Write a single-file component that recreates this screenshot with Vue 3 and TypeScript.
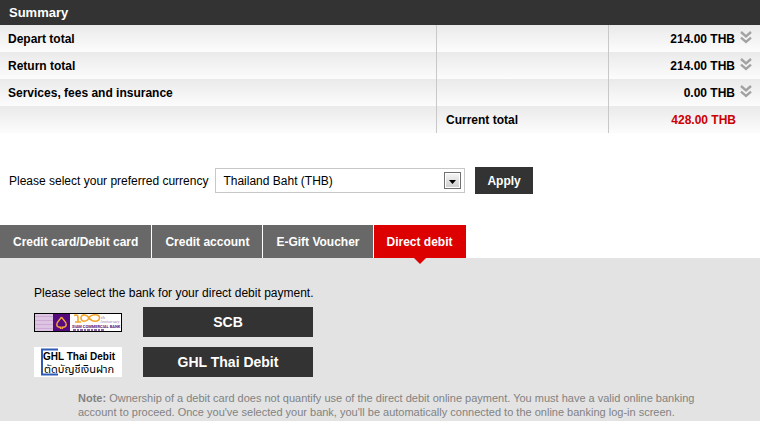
<script setup lang="ts">
import { ref } from 'vue'

interface SummaryRow {
  label: string
  amount: string
}

const rows: SummaryRow[] = [
  { label: 'Depart total', amount: '214.00 THB' },
  { label: 'Return total', amount: '214.00 THB' },
  { label: 'Services, fees and insurance', amount: '0.00 THB' },
]

const tabs: string[] = ['Credit card/Debit card', 'Credit account', 'E-Gift Voucher', 'Direct debit']
const activeTab = ref<string>('Direct debit')
const currency = ref<string>('THB')
</script>

<template>
  <main class="page">
    <section>
      <h2 class="summary-title">Summary</h2>
      <table class="summary">
        <colgroup>
          <col />
          <col class="col-label" />
          <col class="col-amount" />
        </colgroup>
        <tbody>
          <tr v-for="row in rows" :key="row.label">
            <th scope="row">{{ row.label }}</th>
            <td></td>
            <td class="amount">
              <div class="amount-inner">
                <span>{{ row.amount }}</span>
                <button type="button" class="expand" :aria-label="row.label">
                  <svg width="12" height="14" viewBox="0 0 12 14" fill="none" stroke="#a2a2a2" stroke-width="2.4">
                    <path d="M1 1 L6 5.4 L11 1" />
                    <path d="M1 6.6 L6 11 L11 6.6" />
                  </svg>
                </button>
              </div>
            </td>
          </tr>
          <tr>
            <td></td>
            <th scope="row">Current total</th>
            <td class="amount grand">428.00 THB</td>
          </tr>
        </tbody>
      </table>
    </section>

    <form class="currency" @submit.prevent>
      <label for="currency">Please select your preferred currency</label>
      <div class="select-box">
        <select id="currency" v-model="currency">
          <option value="THB">Thailand Baht (THB)</option>
        </select>
        <svg class="arrow" width="17" height="17" viewBox="0 0 17 17">
          <defs>
            <linearGradient id="arrow-fill" x1="0" y1="0" x2="0" y2="1">
              <stop offset="0" stop-color="#f4f4f4" />
              <stop offset="1" stop-color="#cfcfcf" />
            </linearGradient>
          </defs>
          <rect x=".5" y=".5" width="16" height="16" fill="#fff" stroke="#707070" />
          <rect x="2" y="2" width="13" height="13" fill="url(#arrow-fill)" />
          <path d="M5 8 H12 L8.5 12 Z" fill="#000" />
        </svg>
      </div>
      <button type="submit" class="apply">Apply</button>
    </form>

    <nav class="tabs" role="tablist">
      <button
        v-for="tab in tabs"
        :key="tab"
        type="button"
        role="tab"
        class="tab"
        :class="{ active: tab === activeTab }"
        :aria-selected="tab === activeTab"
        @click="activeTab = tab"
      >
        {{ tab }}
      </button>
    </nav>

    <section class="panel" role="tabpanel">
      <p class="lead">Please select the bank for your direct debit payment.</p>
      <div class="bank">
        <svg class="logo" width="88" height="19" viewBox="0 0 88 19">
          <rect width="88" height="19" fill="#fff" />
          <rect x="1" y="1" width="18" height="17" fill="#dcc4e2" />
          <path d="M1 3.5H19M1 7.5H19M1 11.5H19M1 15.5H19" stroke="#cdaad4" />
          <rect x="19" y="1" width="17" height="17" fill="#550a7e" />
          <path
            d="M27.5 4 C26.5 6.5 22.8 8 22.8 11.5 C22.8 13.6 24 14.4 26.6 14.2 V16 M27.5 4 C28.5 6.5 32.2 8 32.2 11.5 C32.2 13.6 31 14.4 28.4 14.2 V16"
            fill="none"
            stroke="#f4a43c"
            stroke-width="1.5"
          />
          <g fill="none" stroke="#f3a52e" stroke-width="1.6">
            <path d="M40 2.5 C42 1.5 44 2 44 4 V8.5 M41 9H47" />
            <path d="M55 5 C53 1 47 0.8 47 5 C47 9.5 53 9 55 5 C57 1 66 0.5 65.5 5 C65 9.5 58 9 55 5 Z" />
          </g>
          <text x="67" y="6" class="logo-th">th</text>
          <text x="66" y="10" class="logo-ann">Anniversary</text>
          <text x="38" y="15" class="logo-scb">SIAM COMMERCIAL BANK</text>
          <path d="M39 17H70" stroke="#673485" stroke-width="1.4" stroke-dasharray="3 1 2 1" />
          <rect x=".5" y=".5" width="87" height="18" fill="none" stroke="#000" />
        </svg>
        <button type="button" class="bank-button">SCB</button>
      </div>
      <div class="bank">
        <svg class="logo" width="88" height="30" viewBox="0 0 88 30">
          <rect width="88" height="30" fill="#fff" />
          <path d="M24 2.5H8V27.5H24" fill="none" stroke="#2f5ab5" stroke-width="2" />
          <text x="9" y="13" class="logo-ghl">GHL Thai Debit</text>
          <text x="10" y="26" class="logo-thai">ตัดบัญชีเงินฝาก</text>
        </svg>
        <button type="button" class="bank-button">GHL Thai Debit</button>
      </div>
      <p class="note">
        <strong>Note:</strong> Ownership of a debit card does not quantify use of the direct debit online payment. You
        must have a valid online banking account to proceed. Once you've selected your bank, you'll be automatically
        connected to the online banking log-in screen.
      </p>
    </section>
  </main>
</template>

<style>
body {
  background: #fff;
}
</style>

<style scoped>
.page {
  font: 12px/16px 'Liberation Sans', Arial, sans-serif;
  color: #000;
}

button,
select {
  font: inherit;
  border: 0;
  border-radius: 0;
}

button {
  padding: 0;
  cursor: pointer;
}

.summary-title {
  margin: 0;
  padding: 4px 9px;
  background: #333;
  color: #fff;
  font-size: 13px;
  line-height: 17px;
}

.summary {
  width: 100%;
  table-layout: fixed;
  border-collapse: separate;
  border-spacing: 0;
}

.col-label {
  width: 172px;
}

.col-amount {
  width: 152px;
}

.summary tr {
  height: 27px;
  background: linear-gradient(#eaeaea, #fcfcfc);
}

.summary th,
.summary td {
  padding: 0 8px;
  text-align: left;
  font-weight: bold;
}

.summary tr > * + * {
  padding-left: 9px;
  border-left: 1px solid #c8c8c8;
}

.summary .amount {
  text-align: right;
}

.amount-inner {
  display: flex;
  justify-content: flex-end;
  align-items: flex-start;
  gap: 5px;
}

.expand {
  background: none;
  height: 14px;
}

.expand svg {
  display: block;
}

.summary .grand {
  padding-right: 24px;
  color: #c00;
}

.currency {
  display: flex;
  align-items: center;
  padding: 34px 9px 31px;
}

.select-box {
  display: grid;
  align-items: center;
  width: 250px;
  margin: 0 10px 0 7px;
}

.select-box > * {
  grid-area: 1 / 1;
}

.select-box select {
  appearance: none;
  width: 100%;
  height: 25px;
  padding: 0 28px 0 7px;
  border: 1px solid #c8c8c8;
  background: #fff;
  color: #000;
}

.arrow {
  justify-self: end;
  margin-right: 4px;
  pointer-events: none;
}

.apply {
  height: 27px;
  padding: 0 12px;
  background: #333;
  color: #fff;
  font-weight: bold;
}

.tabs {
  display: flex;
  gap: 1px;
}

.tab {
  position: relative;
  height: 33px;
  padding: 0 13px;
  background: #686868;
  color: #fff;
  font-weight: bold;
}

.tab.active {
  background: #d00;
}

.tab.active::after {
  content: '';
  position: absolute;
  top: 100%;
  left: 50%;
  margin-left: -6px;
  border: 6px solid transparent;
  border-top-color: #d00;
  border-bottom: 0;
}

.panel {
  padding: 27px 34px 4px;
  background: #e3e3e3;
}

.lead {
  margin: 0 0 6px;
}

.bank {
  display: flex;
  align-items: center;
  gap: 21px;
  margin-bottom: 10px;
}

.bank-button {
  width: 170px;
  height: 30px;
  background: #333;
  color: #fff;
  font-size: 14px;
  font-weight: bold;
}

.logo-th,
.logo-ann {
  font: italic 5px 'Liberation Serif', serif;
  fill: #9a72ad;
}

.logo-ann {
  font-size: 4px;
}

.logo-scb {
  font: bold 4px Roboto, sans-serif;
  fill: #551a7c;
}

.logo-ghl {
  font: bold 10px 'Liberation Sans', sans-serif;
}

.logo-thai {
  font: 11px 'Noto Sans Thai', 'Noto Sans', sans-serif;
}

.note {
  margin: 14px 20px 0 44px;
  color: #828282;
  font-size: 11px;
  line-height: 14px;
}
</style>
